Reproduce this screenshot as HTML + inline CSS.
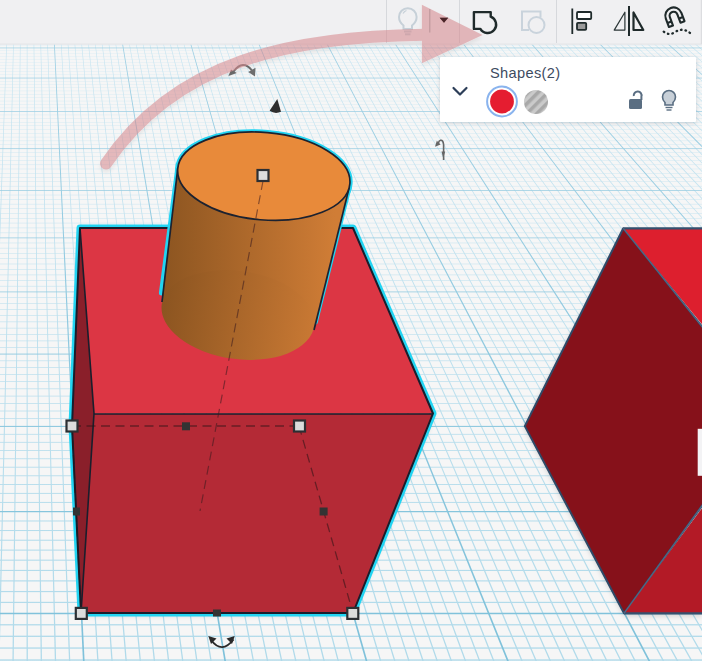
<!DOCTYPE html>
<html><head><meta charset="utf-8">
<style>
html,body{margin:0;padding:0;width:702px;height:661px;overflow:hidden;background:#f6f6f6;font-family:"Liberation Sans",sans-serif;}
svg{position:absolute;left:0;top:0;display:block}
.panel{position:absolute;left:440px;top:57px;width:256px;height:65.3px;background:#fff;border-radius:1px;box-shadow:0 1px 4px rgba(40,60,80,0.2);}
.panel .title{position:absolute;left:50px;top:7.5px;font-size:14.6px;color:#3d4b5f;letter-spacing:0.35px;}
</style></head>
<body>
<svg width="702" height="661" viewBox="0 0 702 661">
<defs>
<linearGradient id="cyl" gradientUnits="userSpaceOnUse" x1="150" y1="0" x2="335" y2="0">
<stop offset="0" stop-color="#87521f"/>
<stop offset="1" stop-color="#d07d36"/>
</linearGradient>
<pattern id="stripes" patternUnits="userSpaceOnUse" width="7" height="7" patternTransform="translate(96 45) rotate(45)">
<rect width="7" height="7" fill="#cacaca"/>
<rect width="3.5" height="7" fill="#a8a8a8"/>
</pattern>
<filter id="ash" x="-20%" y="-20%" width="140%" height="140%">
<feGaussianBlur in="SourceAlpha" stdDeviation="2"/>
<feOffset dx="0" dy="3" result="b"/>
<feComponentTransfer><feFuncA type="linear" slope="0.12"/></feComponentTransfer>
<feMerge><feMergeNode/><feMergeNode in="SourceGraphic"/></feMerge>
</filter>
<linearGradient id="gmin" gradientUnits="userSpaceOnUse" x1="0" y1="44" x2="0" y2="661">
<stop offset="0" stop-color="#c8e5f1"/><stop offset="1" stop-color="#b0daea"/></linearGradient>
<linearGradient id="gmaj" gradientUnits="userSpaceOnUse" x1="0" y1="44" x2="0" y2="661">
<stop offset="0" stop-color="#9fd0e4"/><stop offset="1" stop-color="#7ec1da"/></linearGradient>
<filter id="objsh" x="-10%" y="-10%" width="120%" height="120%"><feGaussianBlur stdDeviation="2.5"/></filter>
</defs>
<!-- grid -->
<rect x="0" y="44" width="702" height="617" fill="#f6f6f6"/>
<g fill="url(#gmin)">
<rect x="0" y="42.17" width="702" height="0.24"/>
<rect x="0" y="44.98" width="702" height="0.24"/>
<rect x="0" y="50.70" width="702" height="0.25"/>
<rect x="0" y="53.60" width="702" height="0.25"/>
<rect x="0" y="56.53" width="702" height="0.25"/>
<rect x="0" y="59.49" width="702" height="0.26"/>
<rect x="0" y="62.48" width="702" height="0.26"/>
<rect x="0" y="65.50" width="702" height="0.26"/>
<rect x="0" y="68.56" width="702" height="0.26"/>
<rect x="0" y="71.64" width="702" height="0.27"/>
<rect x="0" y="74.75" width="702" height="0.27"/>
<rect x="0" y="81.08" width="702" height="0.28"/>
<rect x="0" y="84.29" width="702" height="0.28"/>
<rect x="0" y="87.54" width="702" height="0.29"/>
<rect x="0" y="90.82" width="702" height="0.29"/>
<rect x="0" y="94.14" width="702" height="0.29"/>
<rect x="0" y="97.49" width="702" height="0.30"/>
<rect x="0" y="100.88" width="702" height="0.30"/>
<rect x="0" y="104.31" width="702" height="0.30"/>
<rect x="0" y="107.77" width="702" height="0.31"/>
<rect x="0" y="114.81" width="702" height="0.32"/>
<rect x="0" y="118.39" width="702" height="0.32"/>
<rect x="0" y="122.01" width="702" height="0.33"/>
<rect x="0" y="125.67" width="702" height="0.33"/>
<rect x="0" y="129.37" width="702" height="0.33"/>
<rect x="0" y="133.11" width="702" height="0.34"/>
<rect x="0" y="136.89" width="702" height="0.34"/>
<rect x="0" y="140.72" width="702" height="0.35"/>
<rect x="0" y="144.60" width="702" height="0.35"/>
<rect x="0" y="152.48" width="702" height="0.36"/>
<rect x="0" y="156.49" width="702" height="0.37"/>
<rect x="0" y="160.54" width="702" height="0.37"/>
<rect x="0" y="164.65" width="702" height="0.38"/>
<rect x="0" y="168.80" width="702" height="0.38"/>
<rect x="0" y="173.01" width="702" height="0.39"/>
<rect x="0" y="177.26" width="702" height="0.40"/>
<rect x="0" y="181.57" width="702" height="0.40"/>
<rect x="0" y="185.93" width="702" height="0.41"/>
<rect x="0" y="194.81" width="702" height="0.42"/>
<rect x="0" y="199.33" width="702" height="0.43"/>
<rect x="0" y="203.91" width="702" height="0.43"/>
<rect x="0" y="208.55" width="702" height="0.44"/>
<rect x="0" y="213.25" width="702" height="0.45"/>
<rect x="0" y="218.01" width="702" height="0.45"/>
<rect x="0" y="222.82" width="702" height="0.46"/>
<rect x="0" y="227.70" width="702" height="0.47"/>
<rect x="0" y="232.65" width="702" height="0.47"/>
<rect x="0" y="242.73" width="702" height="0.49"/>
<rect x="0" y="247.88" width="702" height="0.50"/>
<rect x="0" y="253.09" width="702" height="0.50"/>
<rect x="0" y="258.37" width="702" height="0.51"/>
<rect x="0" y="263.73" width="702" height="0.52"/>
<rect x="0" y="269.15" width="702" height="0.53"/>
<rect x="0" y="274.65" width="702" height="0.54"/>
<rect x="0" y="280.23" width="702" height="0.55"/>
<rect x="0" y="285.89" width="702" height="0.56"/>
<rect x="0" y="297.44" width="702" height="0.58"/>
<rect x="0" y="303.34" width="702" height="0.59"/>
<rect x="0" y="309.32" width="702" height="0.60"/>
<rect x="0" y="315.39" width="702" height="0.61"/>
<rect x="0" y="321.55" width="702" height="0.62"/>
<rect x="0" y="327.80" width="702" height="0.63"/>
<rect x="0" y="334.14" width="702" height="0.64"/>
<rect x="0" y="340.57" width="702" height="0.65"/>
<rect x="0" y="347.11" width="702" height="0.66"/>
<rect x="0" y="360.47" width="702" height="0.69"/>
<rect x="0" y="367.30" width="702" height="0.70"/>
<rect x="0" y="374.24" width="702" height="0.71"/>
<rect x="0" y="381.29" width="702" height="0.73"/>
<rect x="0" y="388.45" width="702" height="0.74"/>
<rect x="0" y="395.72" width="702" height="0.75"/>
<rect x="0" y="403.11" width="702" height="0.77"/>
<rect x="0" y="410.62" width="702" height="0.78"/>
<rect x="0" y="418.25" width="702" height="0.80"/>
<rect x="0" y="433.88" width="702" height="0.83"/>
<rect x="0" y="441.89" width="702" height="0.85"/>
<rect x="0" y="450.04" width="702" height="0.86"/>
<rect x="0" y="458.32" width="702" height="0.88"/>
<rect x="0" y="466.75" width="702" height="0.90"/>
<rect x="0" y="475.32" width="702" height="0.92"/>
<rect x="0" y="484.04" width="702" height="0.94"/>
<rect x="0" y="492.91" width="702" height="0.96"/>
<rect x="0" y="501.93" width="702" height="0.98"/>
<rect x="0" y="520.47" width="702" height="1.02"/>
<rect x="0" y="530.00" width="702" height="1.04"/>
<rect x="0" y="539.69" width="702" height="1.07"/>
<rect x="0" y="549.57" width="702" height="1.09"/>
<rect x="0" y="559.62" width="702" height="1.11"/>
<rect x="0" y="569.87" width="702" height="1.14"/>
<rect x="0" y="580.31" width="702" height="1.17"/>
<rect x="0" y="590.96" width="702" height="1.19"/>
<rect x="0" y="601.80" width="702" height="1.22"/>
<rect x="0" y="624.14" width="702" height="1.28"/>
<rect x="0" y="635.65" width="702" height="1.31"/>
<rect x="0" y="647.38" width="702" height="1.34"/>
<rect x="0" y="659.35" width="702" height="1.38"/>
<polygon points="-0.49,44 0.14,44 -28.69,661 -30.00,661"/>
<polygon points="6.33,44 6.96,44 -14.56,661 -15.86,661"/>
<polygon points="13.15,44 13.78,44 -0.42,661 -1.72,661"/>
<polygon points="19.97,44 20.60,44 13.72,661 12.42,661"/>
<polygon points="26.79,44 27.41,44 27.86,661 26.56,661"/>
<polygon points="33.60,44 34.23,44 42.00,661 40.70,661"/>
<polygon points="40.42,44 41.05,44 56.14,661 54.83,661"/>
<polygon points="47.24,44 47.87,44 70.28,661 68.97,661"/>
<polygon points="60.88,44 61.51,44 98.55,661 97.25,661"/>
<polygon points="67.70,44 68.33,44 112.69,661 111.39,661"/>
<polygon points="74.51,44 75.14,44 126.83,661 125.52,661"/>
<polygon points="81.33,44 81.96,44 140.97,661 139.66,661"/>
<polygon points="88.15,44 88.78,44 155.11,661 153.80,661"/>
<polygon points="94.97,44 95.60,44 169.25,661 167.94,661"/>
<polygon points="101.79,44 102.42,44 183.39,661 182.08,661"/>
<polygon points="108.60,44 109.24,44 197.53,661 196.21,661"/>
<polygon points="115.42,44 116.06,44 211.67,661 210.35,661"/>
<polygon points="129.06,44 129.70,44 239.95,661 238.63,661"/>
<polygon points="135.88,44 136.52,44 254.09,661 252.76,661"/>
<polygon points="142.69,44 143.33,44 268.23,661 266.90,661"/>
<polygon points="149.51,44 150.15,44 282.37,661 281.04,661"/>
<polygon points="156.33,44 156.97,44 296.51,661 295.17,661"/>
<polygon points="163.15,44 163.79,44 310.65,661 309.31,661"/>
<polygon points="169.96,44 170.61,44 324.79,661 323.45,661"/>
<polygon points="176.78,44 177.43,44 338.93,661 337.58,661"/>
<polygon points="183.60,44 184.25,44 353.07,661 351.72,661"/>
<polygon points="197.23,44 197.89,44 381.35,661 379.99,661"/>
<polygon points="204.05,44 204.71,44 395.49,661 394.13,661"/>
<polygon points="210.87,44 211.53,44 409.63,661 408.27,661"/>
<polygon points="217.69,44 218.35,44 423.77,661 422.40,661"/>
<polygon points="224.50,44 225.17,44 437.91,661 436.54,661"/>
<polygon points="231.32,44 231.99,44 452.06,661 450.67,661"/>
<polygon points="238.14,44 238.81,44 466.20,661 464.81,661"/>
<polygon points="244.95,44 245.63,44 480.34,661 478.95,661"/>
<polygon points="251.77,44 252.45,44 494.48,661 493.08,661"/>
<polygon points="265.41,44 266.09,44 522.76,661 521.35,661"/>
<polygon points="272.22,44 272.91,44 536.90,661 535.49,661"/>
<polygon points="279.04,44 279.73,44 551.05,661 549.62,661"/>
<polygon points="285.86,44 286.55,44 565.19,661 563.76,661"/>
<polygon points="292.67,44 293.37,44 579.33,661 577.89,661"/>
<polygon points="299.49,44 300.19,44 593.47,661 592.03,661"/>
<polygon points="306.31,44 307.01,44 607.61,661 606.16,661"/>
<polygon points="313.12,44 313.83,44 621.75,661 620.30,661"/>
<polygon points="319.94,44 320.65,44 635.90,661 634.43,661"/>
<polygon points="333.57,44 334.29,44 664.18,661 662.70,661"/>
<polygon points="340.39,44 341.11,44 678.32,661 676.84,661"/>
<polygon points="347.21,44 347.93,44 692.47,661 690.97,661"/>
<polygon points="354.02,44 354.75,44 706.61,661 705.11,661"/>
<polygon points="360.84,44 361.57,44 720.75,661 719.24,661"/>
<polygon points="367.66,44 368.39,44 734.89,661 733.38,661"/>
<polygon points="374.47,44 375.21,44 749.03,661 747.51,661"/>
<polygon points="381.29,44 382.03,44 763.18,661 761.65,661"/>
<polygon points="388.11,44 388.85,44 777.32,661 775.78,661"/>
<polygon points="401.74,44 402.49,44 805.61,661 804.05,661"/>
<polygon points="408.56,44 409.31,44 819.75,661 818.18,661"/>
<polygon points="415.37,44 416.13,44 833.89,661 832.32,661"/>
<polygon points="422.19,44 422.95,44 848.03,661 846.45,661"/>
<polygon points="429.01,44 429.77,44 862.18,661 860.59,661"/>
<polygon points="435.82,44 436.59,44 876.32,661 874.72,661"/>
<polygon points="442.64,44 443.41,44 890.46,661 888.86,661"/>
<polygon points="449.45,44 450.23,44 904.61,661 902.99,661"/>
<polygon points="456.27,44 457.05,44 918.75,661 917.12,661"/>
<polygon points="469.90,44 470.70,44 947.04,661 945.39,661"/>
<polygon points="476.72,44 477.52,44 961.18,661 959.53,661"/>
<polygon points="483.54,44 484.34,44 975.32,661 973.66,661"/>
<polygon points="490.35,44 491.16,44 989.47,661 987.79,661"/>
<polygon points="497.17,44 497.98,44 1003.61,661 1001.93,661"/>
<polygon points="503.98,44 504.80,44 1017.75,661 1016.06,661"/>
<polygon points="510.80,44 511.62,44 1031.90,661 1030.19,661"/>
<polygon points="517.62,44 518.44,44 1046.04,661 1044.33,661"/>
<polygon points="524.43,44 525.26,44 1060.18,661 1058.46,661"/>
<polygon points="538.06,44 538.90,44 1088.47,661 1086.73,661"/>
<polygon points="544.88,44 545.72,44 1102.61,661 1100.86,661"/>
<polygon points="551.70,44 552.55,44 1116.76,661 1114.99,661"/>
<polygon points="558.51,44 559.37,44 1130.90,661 1129.13,661"/>
<polygon points="565.33,44 566.19,44 1145.05,661 1143.26,661"/>
<polygon points="572.14,44 573.01,44 1159.19,661 1157.39,661"/>
<polygon points="578.96,44 579.83,44 1173.33,661 1171.53,661"/>
<polygon points="585.77,44 586.65,44 1187.48,661 1185.66,661"/>
<polygon points="592.59,44 593.47,44 1201.62,661 1199.79,661"/>
<polygon points="606.22,44 607.11,44 1229.91,661 1228.06,661"/>
<polygon points="613.04,44 613.94,44 1244.05,661 1242.19,661"/>
<polygon points="619.85,44 620.76,44 1258.20,661 1256.33,661"/>
<polygon points="626.67,44 627.58,44 1272.34,661 1270.46,661"/>
<polygon points="633.49,44 634.40,44 1286.49,661 1284.59,661"/>
<polygon points="640.30,44 641.22,44 1300.63,661 1298.72,661"/>
<polygon points="647.12,44 648.04,44 1314.77,661 1312.86,661"/>
<polygon points="653.93,44 654.86,44 1328.92,661 1326.99,661"/>
<polygon points="660.75,44 661.68,44 1343.06,661 1341.12,661"/>
<polygon points="674.38,44 675.33,44 1371.35,661 1369.39,661"/>
<polygon points="681.20,44 682.15,44 1385.49,661 1383.52,661"/>
<polygon points="688.01,44 688.97,44 1399.64,661 1397.65,661"/>
<polygon points="694.83,44 695.79,44 1413.78,661 1411.79,661"/>
<polygon points="701.64,44 702.61,44 1427.93,661 1425.92,661"/>
</g>
<g fill="url(#gmaj)">
<rect x="0" y="47.57" width="702" height="0.75"/>
<rect x="0" y="77.66" width="702" height="0.75"/>
<rect x="0" y="111.05" width="702" height="0.75"/>
<rect x="0" y="148.32" width="702" height="0.75"/>
<rect x="0" y="190.17" width="702" height="0.75"/>
<rect x="0" y="237.52" width="702" height="0.75"/>
<rect x="0" y="291.52" width="702" height="0.78"/>
<rect x="0" y="353.63" width="702" height="0.90"/>
<rect x="0" y="425.88" width="702" height="1.05"/>
<rect x="0" y="511.00" width="702" height="1.24"/>
<rect x="0" y="612.74" width="702" height="1.50"/>
<polygon points="53.97,44 54.78,44 84.60,661 82.93,661"/>
<polygon points="122.15,44 122.97,44 225.99,661 224.30,661"/>
<polygon points="190.33,44 191.16,44 367.40,661 365.67,661"/>
<polygon points="258.49,44 259.36,44 508.82,661 507.02,661"/>
<polygon points="326.66,44 327.57,44 650.24,661 648.36,661"/>
<polygon points="394.82,44 395.77,44 791.68,661 789.70,661"/>
<polygon points="462.98,44 463.99,44 933.12,661 931.03,661"/>
<polygon points="531.13,44 532.20,44 1074.57,661 1072.35,661"/>
<polygon points="599.28,44 600.42,44 1216.02,661 1213.67,661"/>
<polygon points="667.43,44 668.64,44 1357.48,661 1354.98,661"/>
</g>

<!-- object shadows -->
<g filter="url(#objsh)" fill="#000" opacity="0.13">
<polygon points="623.3,230 702,230 702,616.5 624,616.5 523.5,427"/>
<polygon points="72,426 81,616 353,616 435,414 300,414"/>
</g>
<!-- right hex object -->
<g stroke="#34506e" stroke-width="2" stroke-linejoin="round">
<polygon points="623.3,228.3 704,329 704,503 624,613.3 524.8,426.1" fill="#86111a" stroke="#2f4a68" stroke-width="2"/>
<polygon points="623.3,228.3 704,228.3 704,326.7" fill="#dd1f2e" stroke="none"/>
<polygon points="624,613.3 704,505.6 704,613.3" fill="#b31a26" stroke="none"/>
<line x1="623.3" y1="228.3" x2="704" y2="228.3" stroke-width="2.2"/>
<line x1="624" y1="613.3" x2="704" y2="613.3" stroke-width="2.2"/>
<line x1="623.3" y1="228.3" x2="704" y2="329" stroke="#4f6885" stroke-width="1.3"/>
<line x1="624" y1="613.3" x2="704" y2="503" stroke="#4f6885" stroke-width="1.3"/>
</g>
<rect x="697.7" y="428.8" width="6" height="47" fill="#f3f3f5"/>

<!-- box cyan silhouette -->
<polygon points="80,228 353,228 433,413.5 353,613 81,613 72,426" fill="none" stroke="#22d4f2" stroke-width="7" stroke-linejoin="round"/>
<!-- box faces -->
<polygon points="80,228 353,228 433,413.5 94,413.5" fill="#dc3644"/>
<polygon points="94,413.5 433,413.5 353,613 81,613" fill="#b42a36"/>
<polygon points="80,228 94,413.5 81,613 72,426" fill="#8a1f2a"/>
<g stroke="#1a1e2c" stroke-width="2" fill="none" stroke-linejoin="round">
<polygon points="80,228 353,228 433,413.5 353,613 81,613 72,426"/>
<polyline points="80,228 94,413.5 81,613" stroke-width="1.6"/>
<line x1="94" y1="414" x2="433" y2="414" stroke-width="1.7"/>
</g>
<!-- dashed hidden edges -->
<g stroke="#2a1416" stroke-width="1.3" fill="none" stroke-dasharray="9,5.5" opacity="0.55">
<line x1="72" y1="426" x2="299" y2="426"/>
<line x1="299" y1="426" x2="353" y2="613"/>
<line x1="72" y1="426" x2="81" y2="613"/>
</g>

<!-- cylinder -->
<g>
<ellipse cx="263.8" cy="176.2" rx="86.6" ry="43.9" transform="rotate(5 263.8 176.2)" fill="none" stroke="#22d4f2" stroke-width="5"/>
<line x1="177.6" y1="169" x2="161.3" y2="293" stroke="#22d4f2" stroke-width="4.8" stroke-linecap="round"/>
<line x1="349.6" y1="186" x2="315.5" y2="322" stroke="#22d4f2" stroke-width="4.8" stroke-linecap="round"/>
<polygon points="177.8,168 349.3,187.1 314,330 162,302" fill="url(#cyl)"/>
<ellipse cx="238" cy="315" rx="77" ry="44" transform="rotate(8 238 315)" fill="url(#cyl)"/>
<line x1="177.8" y1="168" x2="162" y2="302" stroke="#1c2230" stroke-width="1.7"/>
<line x1="349.3" y1="187.1" x2="314" y2="330" stroke="#1c2230" stroke-width="1.7"/>
<ellipse cx="263.8" cy="176.2" rx="86.4" ry="43.7" transform="rotate(5 263.8 176.2)" fill="#e88a3a" stroke="#1c2230" stroke-width="1.7"/>
<line x1="263" y1="181" x2="200" y2="511" stroke="#3a1a1e" stroke-width="1.2" stroke-dasharray="9,5.5" opacity="0.55"/>
</g>

<!-- handles -->
<g fill="#dcdcdc" stroke="#2c2f33" stroke-width="2.2">
<rect x="257.5" y="170" width="11" height="11"/>
<rect x="66.5" y="420.5" width="11" height="11"/>
<rect x="294" y="420.5" width="11" height="11"/>
<rect x="75.8" y="607.9" width="11" height="11"/>
<rect x="347.3" y="607.9" width="11" height="11"/>
</g>
<g fill="#333">
<rect x="182" y="422.3" width="8" height="8"/>
<rect x="73" y="507.5" width="7" height="8"/>
<rect x="319.6" y="507.5" width="8" height="8"/>
<rect x="213" y="609.5" width="8" height="7"/>
</g>

<!-- small indicators -->
<path d="M233.5,71.5 Q243,59 252,70.5" fill="none" stroke="#6e6e6e" stroke-width="2"/>
<polygon points="228.5,76 231,69.5 236.8,73" fill="#6e6e6e"/>
<polygon points="255,76.5 248.2,72 255.5,67.8" fill="#6e6e6e"/>
<path d="M277.3,98.9 L269.6,110.8 Q275,114.5 281,111.8 Z" fill="#2e2e2e"/>
<path d="M443.6,160 L443.6,144.5 Q443,139.5 440.5,140.3 Q438.8,140.8 438.3,143.5" fill="none" stroke="#666" stroke-width="1.6"/>
<polygon points="435,146.8 436.8,140.8 440.6,144.6" fill="#666"/>
<polygon points="441.5,151.5 445.2,151.5 443.2,158" fill="#666"/>
<path d="M211,640 Q222,654.5 233.5,639.5" fill="none" stroke="#2a2a2a" stroke-width="1.9"/>
<polygon points="208.3,636 216.5,638.5 211,644" fill="#2a2a2a"/>
<polygon points="234.7,636 226.5,638.5 232,644" fill="#2a2a2a"/>

<!-- toolbar -->
<rect x="0" y="0" width="702" height="44.5" fill="#f0f0f2"/>
<rect x="0" y="43.6" width="702" height="1" fill="#e2e3e6"/>
<rect x="700.8" y="0" width="1.2" height="44" fill="#dcdde0"/>
<g stroke="#d6d8dc" stroke-width="1">
<line x1="386.5" y1="0" x2="386.5" y2="43"/>
<line x1="459.5" y1="0" x2="459.5" y2="43"/>
<line x1="556.5" y1="0" x2="556.5" y2="43"/>
</g>
<line x1="429.8" y1="9" x2="429.8" y2="32.5" stroke="#c8ccd0" stroke-width="1"/>
<!-- bulb (toolbar, disabled) -->
<g fill="none" stroke="#c6d0d8" stroke-width="2">
<path d="M403.5,29 L403.5,25.5 Q399,22 399,17 A8.8,8.8 0 1 1 416.6,17 Q416.6,22 412,25.5 L412,29 Z"/>
<line x1="404" y1="31.5" x2="411.5" y2="31.5"/>
<line x1="405" y1="34.3" x2="410.5" y2="34.3"/>
</g>
<polygon points="439.7,17.7 448.2,17.7 444,22.8" fill="#333"/>
<!-- group icon -->
<path d="M473.9,12.1 L490.7,12.1 L490.7,16.7 A8.45,8.45 0 1 1 480.4,28.9 L473.9,28.9 Z" fill="none" stroke="#1f2a2b" stroke-width="2.4" stroke-linejoin="round"/>
<!-- ungroup icon -->
<g fill="none" stroke="#c9d3dc" stroke-width="2">
<path d="M529,30 L522,30 L522,11.5 L540.5,11.5 L540.5,17.5"/>
<circle cx="536.5" cy="25" r="8"/>
</g>
<!-- align icon -->
<line x1="572.3" y1="8.5" x2="572.3" y2="34" stroke="#1f2a2b" stroke-width="1.8"/>
<rect x="577" y="12" width="14.2" height="7" rx="1" fill="#fff" stroke="#1f2a2b" stroke-width="1.8"/>
<rect x="577" y="22.8" width="9.2" height="7" rx="1" fill="#9a9a9a" stroke="#1f2a2b" stroke-width="1.8"/>
<!-- mirror icon -->
<line x1="629" y1="6" x2="629" y2="36" stroke="#1f2a2b" stroke-width="2"/>
<polygon points="624.9,12.2 624.9,30.1 614.2,30.1" fill="none" stroke="#2a3536" stroke-width="1.2" stroke-linejoin="round"/>
<polygon points="633.5,12.5 633.5,30 643.3,30" fill="none" stroke="#1f2a2b" stroke-width="2.2" stroke-linejoin="round"/>
<!-- magnet icon -->
<g transform="translate(673.6 15.7) rotate(-20.5)" fill="none" stroke="#1f2a2b" stroke-width="2.1" stroke-linejoin="round">
<path d="M-8.3,9 L-8.3,0 A8.3,8.3 0 0 1 8.3,0 L8.3,9 L4,9 L4,0 A4,4 0 0 0 -4,0 L-4,9 Z"/>
<line x1="-8.3" y1="4.6" x2="-4" y2="4.6"/>
<line x1="4" y1="4.6" x2="8.3" y2="4.6"/>
</g>
<path d="M663.7,31.6 Q669,35.8 674,32.6 Q679,29.4 683,29.8 Q687,30.4 690,33" fill="none" stroke="#1f2a2b" stroke-width="2.3" stroke-dasharray="0.6,4.0" stroke-linecap="round"/>

<!-- big pink arrow overlay -->
<g filter="url(#ash)" opacity="0.55">
<g fill="#d6868b" stroke="none">
<path d="M106,163.6 C176.2,59.8 293.2,36.4 424,34.7" fill="none" stroke="#d6868b" stroke-width="12" stroke-linecap="round"/>
<polygon points="421.9,4.8 421.9,63.2 482.6,35"/>
</g>
</g>
<polygon points="439.7,17.7 448.2,17.7 444,22.8" fill="#4a2428"/>
<line x1="429.8" y1="9" x2="429.8" y2="32.5" stroke="#b08c90" stroke-width="1" opacity="0.6"/>
<g fill="none" stroke="#c6d0d8" stroke-width="1.2"><path d="M403,13.5 Q404.5,11 406.5,10.5"/></g>
</svg>

<div class="panel">
<div class="title">Shapes(2)</div>
<svg width="256" height="65" viewBox="0 0 256 65" style="position:absolute;left:0;top:0">
<polyline points="13.5,31 20,37.5 26.5,31" fill="none" stroke="#2c3e58" stroke-width="2.2" stroke-linecap="round" stroke-linejoin="round"/>
<circle cx="62" cy="44.5" r="14.9" fill="none" stroke="#8ab4ee" stroke-width="2"/>
<circle cx="62" cy="44.5" r="11.9" fill="#e51d30"/>
<circle cx="96" cy="45" r="12" fill="url(#stripes)"/>
<!-- lock -->
<path d="M193.8,39 A3.9,3.9 0 1 1 201.4,39.5 L201.4,43" fill="none" stroke="#5a6e82" stroke-width="2"/>
<rect x="189" y="42" width="13" height="10" rx="1.5" fill="#5a6e82"/>
<!-- bulb -->
<path d="M225,48 L225,45.5 Q222.5,43 222.5,40 A6.5,6.5 0 1 1 235.5,40 Q235.5,43 233,45.5 L233,48 Z" fill="#c8d0d8" stroke="#5a6e82" stroke-width="1.6"/>
<line x1="225.5" y1="50.5" x2="232.5" y2="50.5" stroke="#5a6e82" stroke-width="1.4"/>
<line x1="226.5" y1="53" x2="231.5" y2="53" stroke="#5a6e82" stroke-width="1.4"/>
</svg>
</div>
</body></html>
